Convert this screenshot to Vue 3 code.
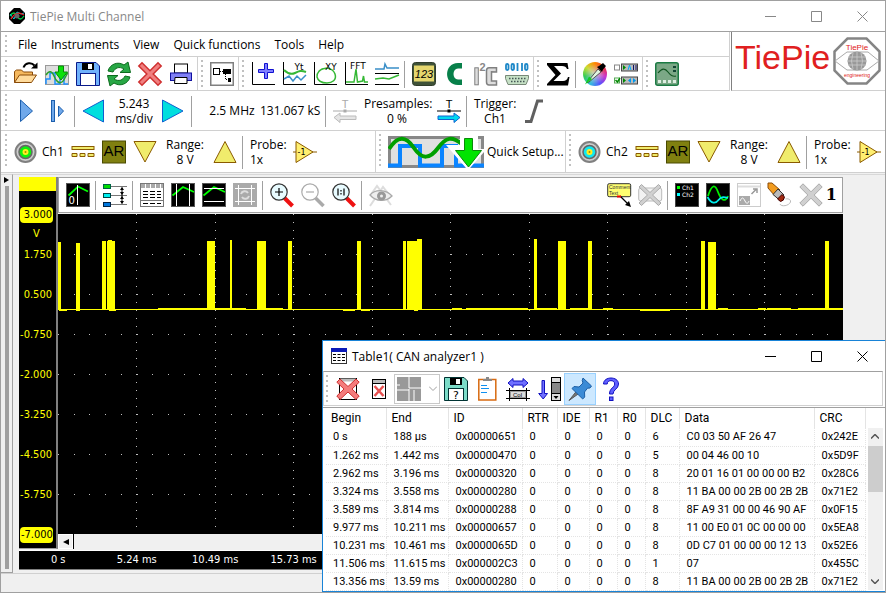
<script setup>
const menu = ['File', 'Instruments', 'View', 'Quick functions', 'Tools', 'Help']

const icons = {
  open: '<path d="M.5 20.500V9.500l2-1.500h5l2 2h9v3" fill="#f5b95f" stroke="#8a4b08"/><path d="M.5 20.500l5-7.500h17l-5 7.500z" fill="#ffdb9c" stroke="#8a4b08"/><path d="M9.500 5.500c2-5 8-5.500 11-2" fill="none" stroke="#000" stroke-width="2"/><path d="M23.500.5v6h-6.500z"/>',
  load: '<rect x=".5" y="3.500" width="23" height="19" fill="#ddd" stroke="#999"/><path d="M1 22v-5h4v-6h5v11h5v-8h4v8h4" fill="none" stroke="#1e90ff" stroke-width="1.500"/><path d="M1 13c3-5 6-4 8 1s5 8 8 6 4-8 6-9" fill="none" stroke="#2ca02c" stroke-width="1.500"/><path d="M13.500 4h5v6h4L16 18l-6-8h3.500z" fill="#0be00b" stroke="#078a07"/>',
  save: '<path d="M.5.500H20l3.500 3.500v19.500H.5z" fill="#6fb1fb" stroke="#0a1a8a"/><rect x="6" y="1" width="12" height="7"/><rect x="12" y="2" width="4" height="5" fill="#fff"/><rect x="4.500" y="11.500" width="15" height="12" fill="#fff" stroke="#0a1a8a"/>',
  refresh: '<path d="M1 9C3 2 11-1 17 3l4-3 2.500 10.500H13l4-3.500C12 4 8 6 6 10z" fill="#28a745" stroke="#0b6b1d"/><path d="M23 15c-2 7-10 10-16 6l-4 3L.5 13.500H11L7 17c5 3 9 1 11-3z" fill="#28a745" stroke="#0b6b1d"/>',
  close: '<path d="M4 .8l8 8 8-8L23.200 4l-8 8 8 8-3.200 3.200-8-8-8 8L.8 20l8-8-8-8z" fill="#f08080" stroke="#d03030" stroke-width="1.500"/>',
  print: '<rect x="5.500" y="2" width="13" height="9" fill="#fff" stroke="#000"/><rect x="1.500" y="11" width="21" height="7.500" fill="#8080f5" stroke="#1010a0"/><path d="M6 15.500h12v6H5.500z" fill="#fff" stroke="#000"/>',
  source: '<rect x=".75" y=".75" width="22.500" height="22.500" fill="#fff" stroke="#808080" stroke-width="1.500"/><rect x="3.500" y="6.500" width="6" height="6" fill="none" stroke="#000"/><path d="M10 9.500h4M15.500 12v5.500H17" stroke="#000" fill="none" stroke-dasharray="1 1"/><rect x="13" y="7" width="8" height="5"/><rect x="18" y="16" width="3" height="4"/>',
  add: '<path d="M1.500 0v22.500H24" fill="none" stroke="#000"/><path d="M13.500 1.500h3v6h6v3h-6v6h-3v-6h-6v-3h6z" fill="#8080ff" stroke="#1010d0"/>',
  yt: '<path d="M1.500 0v22.500H24" fill="none" stroke="#000"/><path d="M2 8c4 4 7 5 11 3s6-3 11-1" fill="none" stroke="#35b835" stroke-width="2"/><path d="M2 17l5-3 4 5 4-5 4 4 5-5" fill="none" stroke="#3a8fc8" stroke-width="1.500"/><text x="12.500" y="8" font-size="9" font-family="DejaVu Sans">Yt</text>',
  xy: '<path d="M1.500 0v22.500H24" fill="none" stroke="#000"/><path d="M6 9c5-5 14-3 16 3s-3 9-8 9-9-2-10-6 4-8 6-8" fill="none" stroke="#35b835" stroke-width="1.500"/><text x="12" y="8" font-size="9" font-family="DejaVu Sans">XY</text>',
  fft: '<path d="M1.500 0v22.500H24" fill="none" stroke="#000"/><path d="M2 20h8l2-13 1.500 13 5-1 1-5 1 6H24" fill="none" stroke="#35b835" stroke-width="1.500"/><text x="6" y="7" font-size="9" font-family="DejaVu Sans">FFT</text>',
  lines: '<path d="M0 7h9l1-5 2 4h12" fill="none" stroke="#3a8fc8" stroke-width="1.500"/><path d="M0 17l8-1 6 1 10-4" fill="none" stroke="#35b835" stroke-width="1.500"/><path d="M0 11.500h24M0 22.500h24" stroke="#000"/>',
  meter: '<rect x=".5" y=".5" width="23" height="23" rx="3" fill="#3f5238" stroke="#303d2b"/><rect x="2" y="3.500" width="20" height="16" fill="#e5d76e"/><text x="12" y="16" text-anchor="middle" font-size="11" font-style="italic" font-family="Liberation Sans">123</text>',
  cee: '<path d="M19 1v5.500h-4c-6 0-6 11 0 11h4V23h-4C.5 23 .5 1 15 1z" fill="#08804a"/>',
  i2c: '<rect x=".8" y="5.800" width="3.500" height="17" fill="#ddd" stroke="#808080"/><text x="5.500" y="9" font-size="11" font-weight="bold" fill="#888" font-family="Liberation Sans">2</text><path d="M22.500 10V5.800h-7.500q-2.500 0-2.500 3V20q0 3 2.500 3h7.500v-4h-5V9.800z" fill="#ddd" stroke="#808080" stroke-width="1.500"/>',
  serial: '<g fill="none" stroke="#1e88c8" stroke-width="1.800"><rect x="1" y="2" width="2.500" height="6" rx="1.200"/><rect x="6.500" y="2" width="2.500" height="6" rx="1.200"/><path d="M12.500 1v8M17 1v8"/><rect x="20" y="2" width="2.500" height="6" rx="1.200"/></g><path d="M.5 13.500h23v3l-2.500 6H3l-2.500-6z" fill="#c5e0c5" stroke="#778877"/><path d="M4 16.500h17M6 19.500h14" stroke="#455" stroke-width="1.500" stroke-dasharray="1.500 1.500"/>',
  sigma: '<path d="M1 1h20.500l1 6h-1.500q-1-3-5-3H8l7 7.500L7.500 19H17q4 0 5-4h1.500L22 23.500H1V22l8.500-9L1 3z"/>',
  scope: '<rect x=".75" y=".75" width="22.500" height="22.500" rx="2" fill="#7ba886" stroke="#1b7a43" stroke-width="1.500"/><path d="M3 11c4-5 7-5 10-1s5 5 8 4" fill="none" stroke="#152" stroke-width="1.200"/><path d="M3 19.500h18" stroke="#dfeee2" stroke-width="3" stroke-dasharray="3 2"/><path d="M18 5h3M18 9h3" stroke="#143" stroke-width="2"/>',
  checks: '<rect x=".5" y="3" width="5" height="5" fill="#fff" stroke="#888"/><rect x="7.500" y="2" width="16" height="7" fill="#bbb" stroke="#444"/><path d="M9 3l3 2.500L9 8z" fill="#080"/><path d="M14 8l1.500-5L17 8" stroke="#0af" fill="none"/><path d="M19.500 3v5M22 3v5" stroke="#116" /><rect x=".5" y="16" width="5" height="5" fill="#fff" stroke="#5a5"/><path d="M1.500 18l2 2L6 16" fill="none" stroke="#080" stroke-width="1.500"/><rect x="7.500" y="15" width="16" height="7" fill="#bbb" stroke="#444"/><path d="M9 16l3 2.500L9 21z" fill="#080"/><path d="M17 16v5l-3-2.500zM19 16v5l3-2.500z" fill="#09e"/>',
  play: '<path d="M6.500 1v21.500L18.500 12z" fill="#6fa8ea" stroke="#1c5fae"/>',
  step: '<rect x="6.500" y="1.500" width="3" height="21" fill="#6fa8ea" stroke="#1c5fae"/><path d="M13.500 7v10.500l5-5.500z" fill="#6fa8ea" stroke="#1c5fae"/>',
  left: '<path d="M21.500 1v22L1 12z" fill="#00dede" stroke="#1060d0"/>',
  right: '<path d="M.5 1v22L21 12z" fill="#00dede" stroke="#1060d0"/>',
  down: '<path d="M1 1.500h22L12 22z" fill="#f0ec6c" stroke="#8a5a00"/>',
  up: '<path d="M1 22.500h22L12 1.500z" fill="#f0ec6c" stroke="#8a5a00"/>',
  coupling: '<rect x="1" y="6.500" width="22" height="3" fill="#f0ec6c" stroke="#8a5a00"/><path d="M1 13.500h5v3H1zM9 13.500h5v3H9zM17 13.500h6v3h-6z" fill="#f0ec6c" stroke="#8a5a00"/>',
  auto: '<rect x=".5" y="1" width="23" height="22" fill="#808010" stroke="#4a4a00"/><text x="12" y="16" text-anchor="middle" font-size="15" font-family="Liberation Sans">AR</text>',
  amp: '<path d="M0 12h24" stroke="#8a5a00"/><path d="M3 1.500v21L20 12z" fill="#ffef70" stroke="#8a5a00"/><text x="4.500" y="15" font-size="8" font-family="DejaVu Sans">-1</text>',
  slope: '<path d="M2 22.500h6L14.500 2H20" fill="none" stroke="#606060" stroke-width="3"/>',
  preOff: '<text x="12" y="9" text-anchor="middle" font-size="11" fill="#aaa" font-family="Liberation Sans">T</text><path d="M0 12h24" stroke="#aaa"/><path d="M10.500 10.500h3v3h-3z" fill="#aaa"/><path d="M1 18.500l6-4.500v3h16v3.500H7v3z" fill="#e5e5e5" stroke="#bbb"/>',
  preOn: '<text x="12" y="9" text-anchor="middle" font-size="11" font-family="Liberation Sans">T</text><path d="M0 12h24" stroke="#000"/><path d="M10.500 10.500h3v3h-3z"/><path d="M23 18.500L17 14v3H1v3.500h16v3z" fill="#00d8f0" stroke="#1060d0"/>',
  cursor: '<rect width="24" height="24" fill="#555"/><rect x="1" y="1" width="22" height="22"/><path d="M2.500 12.500L12 3.500l10 5" fill="none" stroke="#0f0" stroke-width="1.800"/><path d="M11.500 2v20" stroke="#fff"/><text x="2.500" y="21" font-size="10" fill="#fff" font-family="DejaVu Sans">0</text>',
  levels: '<path d="M8 3.500h16M8 12.500h16M8 21.500h16" stroke="#777"/><rect x=".5" y="1.500" width="7" height="4" fill="#0d0" stroke="#064"/><rect x=".5" y="10.500" width="7" height="4" fill="#0ee" stroke="#044"/><rect x=".5" y="19.500" width="7" height="4" fill="#07d" stroke="#024"/><path d="M19 4.500v16" stroke="#000"/><path d="M19 4l2 3h-4zM19 12l2-3h-4zM19 13l2 3h-4zM19 21l2-3h-4z"/>',
  table: '<rect x=".5" y=".5" width="23" height="23" fill="#fff" stroke="#777"/><path d="M1 3h22" stroke="#aaa" stroke-width="4" stroke-dasharray="4 1"/><path d="M3 8.500h18M3 11.500h18M3 14.500h18M3 20.500h18" stroke="#000" stroke-dasharray="5 2"/><path d="M1 17.500h22" stroke="#777"/>',
  vcur: '<rect width="24" height="24" fill="#555"/><rect x="1" y="1" width="22" height="22"/><path d="M1.500 12.500L12 4l11 5" fill="none" stroke="#0f0" stroke-width="1.800"/><path d="M5.500 1v22M18.500 1v22" stroke="#fff"/>',
  hcur: '<rect width="24" height="24" fill="#555"/><rect x="1" y="1" width="22" height="22"/><path d="M1.500 12.500L12 4l11 5" fill="none" stroke="#0f0" stroke-width="1.800"/><path d="M2 5.500h20M2 18.500h20" stroke="#fff"/>',
  cross: '<rect width="24" height="24" fill="#aaa"/><path d="M5.500 2v20M18.500 2v20M2 5.500h20M2 18.500h20" stroke="#fff"/><path d="M8 11c1-3 5-4 7-1M16 13c-1 3-5 4-7 1" fill="none" stroke="#ddd" stroke-width="2"/>',
  zoomIn: '<path d="M14.500 15l8 8" stroke="#e11" stroke-width="4"/><circle cx="9" cy="9" r="8.200" fill="#e8fbff" stroke="#333" stroke-width="1.200"/><path d="M5 9h8M9 5v8" stroke="#000" stroke-width="1.200"/>',
  zoomOut: '<path d="M14.500 15l8 8" stroke="#aaa" stroke-width="3.500"/><circle cx="9" cy="9" r="8.200" fill="#fff" stroke="#aaa" stroke-width="1.200"/><path d="M5 9h8" stroke="#aaa" stroke-width="1.200"/>',
  zoomFit: '<path d="M14.500 15l8 8" stroke="#e11" stroke-width="4"/><circle cx="9" cy="9" r="8.200" fill="#e8fbff" stroke="#333" stroke-width="1.200"/><path d="M6 5.500v7M12 5.500v7M9 7v1.500M9 10v1.500" stroke="#000" stroke-width="1.200"/>',
  eye: '<path d="M1 23L14 4l8 10M3 10L8 3l14 19" fill="none" stroke="#ddd" stroke-width="2"/><path d="M1 12c5-6 16-6 22 1-6 6-16 6-22-1z" fill="#eee" stroke="#aaa" stroke-width="1.300"/><circle cx="12.500" cy="13" r="4.500" fill="#999"/><circle cx="12.500" cy="13" r="1.500" fill="#eee"/>',
  note: '<rect x=".7" y=".7" width="23" height="13" rx="1.500" fill="#ffff70" stroke="#333"/><text x="2" y="6" font-size="5" fill="#333" font-family="Liberation Sans">Comment</text><text x="2" y="12" font-size="5" fill="#333" font-family="Liberation Sans">Text</text><path d="M13 13l9 9" stroke="#000" stroke-width="1.300"/><path d="M24 24l-6-2 4-4z"/><path d="M10 13.500h4" stroke="#e00" stroke-width="2"/>',
  noteOff: '<rect x=".7" y="5" width="23" height="13" rx="2" fill="#f2f2f2" stroke="#bbb"/><path d="M3.500 1.500l8.500 8 8.500-8L23 4l-8.500 8 8.500 8-2.500 2.500-8.500-8-8.500 8L1 20l8.500-8L1 4z" fill="#d0d0d0" stroke="#aaa"/>',
  legend: '<rect width="24" height="24" fill="#444"/><rect x="1" y="1" width="22" height="22"/><path d="M2 3h3v3H2z" fill="#0f0"/><path d="M2 10h3v3H2z" fill="#0ff"/><text x="7" y="7" font-size="6" fill="#fff" font-family="DejaVu Sans">Ch1</text><text x="7" y="14" font-size="6" fill="#fff" font-family="DejaVu Sans">Ch2</text>',
  waves: '<rect width="24" height="24" fill="#444"/><rect x="1" y="1" width="22" height="22"/><path d="M2 13C6 1 9 1 12 9s7 11 10 4" fill="none" stroke="#0e0" stroke-width="1.800"/><path d="M1.500 14c4 7 8 7 11 3s6-3 9.500-2" fill="none" stroke="#0ee" stroke-width="1.800"/>',
  detach: '<rect x=".5" y=".5" width="23" height="23" fill="#fff" stroke="#ccc"/><path d="M1 3.500h22" stroke="#ddd" stroke-width="2"/><rect x="2" y="13" width="11" height="9" fill="#aaa"/><path d="M3 18c2-4 3-4 5 0s3 2 4 0" fill="none" stroke="#fff"/><path d="M14.500 11l5-5M16 6h4v4" fill="none" stroke="#999" stroke-width="1.500"/>',
  erase: '<path d="M0 0h4l8 7-5 6L0 5z" fill="#f29c1f" stroke="#8a4b08"/><path d="M10 6l6 6-4.500 5L5 11.500z" fill="#bbb" stroke="#333"/><path d="M14 11.500l2.500 2.500q-.5 4-4 4.500L9.500 16z" fill="#a22a10" stroke="#400"/><path d="M12 21c1 3 9 2 10.500-2 .5-3-3-3.500-5-3" fill="none" stroke="#bbb"/>',
  wipe: '<path d="M4 .8l8 8 8-8L23.200 4l-8 8 8 8-3.200 3.200-8-8-8 8L.8 20l8-8-8-8z" fill="#d0d0d0" stroke="#aaa"/>',
  delTable: '<rect x="3.500" y="1.500" width="17" height="21" fill="#fff" stroke="#000"/><path d="M4 3h16" stroke="#bbb" stroke-width="3"/><path d="M4 2l8 7.500L20 2l3.200 3.200L16 12l7.200 7L20 22.500l-8-7.500-8 7.500L.8 19 8 12 .8 5.200z" fill="#f47c7c" stroke="#d03030"/>',
  clearTable: '<rect x="5.500" y="2.500" width="13" height="19" fill="#fff" stroke="#000"/><path d="M6 4.500h12" stroke="#bbb" stroke-width="3"/><path d="M6 6.500h12" stroke="#000"/><path d="M7.500 9l9 10M16.500 9l-9 10" stroke="#e85050" stroke-width="2.500"/>',
  layout: '<path d="M0 0h24v24H0z" fill="#999"/><path d="M12 0v11M0 13h12M12 11h12M0 8h3M12 12v12M17 13v11" stroke="#fff"/>',
  saveAs: '<path d="M.5.500H20l3.500 3.500v19.500H.5z" fill="#7cdcc8" stroke="#033"/><rect x="6" y="1" width="12" height="7"/><rect x="12" y="2" width="4" height="5" fill="#fff"/><rect x="4.500" y="11.500" width="15" height="12" fill="#fff" stroke="#033"/><text x="12" y="22" text-anchor="middle" font-size="11" font-family="DejaVu Sans">?</text>',
  clip: '<rect x="3.800" y="2.500" width="17" height="20.500" fill="#fff" stroke="#d86a10" stroke-width="1.500"/><path d="M8 4V2h3V0h3v2h3v2z" fill="#888"/><path d="M6 8.500h6M6 11.500h8M6 15.500h6" stroke="#1090f0"/>',
  column: '<path d="M2 6l5-4.500V4h10V1.500L22 6l-5 4.500V8H7v2.500z" fill="#7070ff" stroke="#1010c0"/><path d="M0 13.500h24M0 21.500h24M3.500 11v13M20.500 11v13" stroke="#000"/><rect x="4.500" y="14.500" width="15" height="6" fill="#ddd" stroke="#999"/><text x="7" y="20" font-size="6" font-family="Liberation Sans">Col</text>',
  scroll: '<path d="M5 3.500h2.500v13h3L6.200 22l-4.500-5.500H5z" fill="#7070ff" stroke="#1010c0"/><rect x="14.500" y=".5" width="9" height="23" fill="#ddd" stroke="#000"/><path d="M15 6h8v10h-8z" fill="#888"/><path d="M14.500 5.500h9M14.500 16.500h9" stroke="#000"/><path d="M16.500 19h5l-2.500 3z"/>',
  pin: '<path d="M1 23.500l8-10 2.500 2.500z" fill="#777" stroke="#555"/><path d="M15 1l8.500 8-1.500 2-2.500.2-3 3.800.2 5-2 2L4 11.500l2-2 5 .5 4-4-.8-2.500z" fill="#3b8bd6" stroke="#1d5fa5"/>',
  help: '<path d="M4.500 7C4.500-1 19.500-1 19.500 7c0 5-5.500 5.500-5.500 10h-3.500c0-6 5.200-6.500 5.200-10 0-4.500-7.500-4.500-7.500 0z" fill="#6060ff" stroke="#1010c0"/><rect x="10.500" y="20" width="3.500" height="3.500" fill="#6060ff" stroke="#1010c0"/>'
}

const toolGroups = [
  ['open', 'load', 'save', 'refresh', 'close', 'print'],
  ['source'],
  ['add', 'yt', 'xy', 'fft', 'lines', '|', 'meter', 'cee', 'i2c', 'serial'],
  ['sigma', '|', 'wheel', 'checks'],
  ['scope']
]
const graphLeft = ['cursor', '|', 'levels', '|', 'table', 'vcur', 'hcur', 'cross', '|', 'zoomIn', 'zoomOut', 'zoomFit', '|', 'eye']
const graphRight = ['note', 'noteOff', '|', 'legend', 'waves', 'detach', 'erase', 'wipe']

const channels = [
  { name: 'Ch1', color: '#10ee10', range: '8 V', probe: '1x' },
  { name: 'Ch2', color: '#10e8f0', range: '8 V', probe: '1x' }
]

const yLabels = ['3.000', '1.750', '0.500', '-0.750', '-2.000', '-3.250', '-4.500', '-5.750', '-7.000']
const xLabels = ['0 s', '5.24 ms', '10.49 ms', '15.73 ms']

// pulses: [left, width, top] in plot units
const pulses = [
  [0, 3, 28], [18, 4, 29], [44, 4, 27], [49, 8, 27], [50, 4, 26],
  [149, 8, 27], [172, 2, 26], [199, 9, 27], [230, 4, 27], [299, 4, 27],
  [345, 3, 27], [349, 15, 27], [359, 5, 25], [476, 3, 25],
  [500, 8, 27], [530, 4, 27], [643, 4, 27], [650, 8, 28], [767, 4, 27]
]
const noise = [
  [1, 8, 96], [18, 4, 96], [51, 7, 96], [100, 30, 94], [130, 20, 94], [148, 40, 94], [200, 25, 94],
  [285, 12, 96], [303, 9, 96], [356, 4, 96], [394, 10, 94], [408, 62, 94], [477, 22, 94], [512, 20, 94],
  [545, 10, 94], [582, 30, 96], [660, 10, 94], [700, 8, 94], [709, 24, 94], [740, 30, 94], [771, 14, 94]
]
const hLines = [40, 80, 120, 160, 200, 240, 280]
const vLines = [1, 2, 3, 4, 5, 6, 7, 8, 9].map(n => Math.floor(n * 78.5))

const columns = ['Begin', 'End', 'ID', 'RTR', 'IDE', 'R1', 'R0', 'DLC', 'Data', 'CRC']
const rows = [
  ['0 s', '188 µs', '0x00000651', 0, 0, 0, 0, 6, 'C0 03 50 AF 26 47', '0x242E'],
  ['1.262 ms', '1.442 ms', '0x00000470', 0, 0, 0, 0, 5, '00 04 46 00 10', '0x5D9F'],
  ['2.962 ms', '3.196 ms', '0x00000320', 0, 0, 0, 0, 8, '20 01 16 01 00 00 00 B2', '0x28C6'],
  ['3.324 ms', '3.558 ms', '0x00000280', 0, 0, 0, 0, 8, '11 BA 00 00 2B 00 2B 2B', '0x71E2'],
  ['3.589 ms', '3.814 ms', '0x00000288', 0, 0, 0, 0, 8, '8F A9 31 00 00 46 90 AF', '0x0F15'],
  ['9.977 ms', '10.211 ms', '0x00000657', 0, 0, 0, 0, 8, '11 00 E0 01 0C 00 00 00', '0x5EA8'],
  ['10.231 ms', '10.461 ms', '0x0000065D', 0, 0, 0, 0, 8, '0D C7 01 00 00 00 12 13', '0x52E6'],
  ['11.506 ms', '11.615 ms', '0x000002C3', 0, 0, 0, 0, 1, '07', '0x455C'],
  ['13.356 ms', '13.59 ms', '0x00000280', 0, 0, 0, 0, 8, '11 BA 00 00 2B 00 2B 2B', '0x71E2']
]
</script>

<template>
  <div class="app">
    <header class="titlebar">
      <svg class="app-icon" viewBox="0 0 16 16">
        <path d="M5 0h6l5 5v6l-5 5H5l-5-5V5z" />
        <path d="M1 8q4-6 7 0t7 0" fill="none" stroke="#0c4" stroke-width="1.300" />
        <path d="M1 6l4 5 3-7 4 2 3-1" fill="none" stroke="#0cd" />
        <path d="M2 11q5-9 13-4" fill="none" stroke="#e22" stroke-width="1.300" />
        <circle cx="8" cy="8" r="2.500" fill="#666" />
      </svg>
      <h1>TiePie Multi Channel</h1>
      <div class="win-buttons faded">
        <button aria-label="Minimize"><svg viewBox="0 0 11 11"><path d="M0 5.500h11" /></svg></button>
        <button aria-label="Maximize"><svg viewBox="0 0 11 11"><path d="M.5.500h10v10H.5z" /></svg></button>
        <button aria-label="Close"><svg viewBox="0 0 11 11"><path d="M.5.500l10 10M10.500.5l-10 10" /></svg></button>
      </div>
    </header>

    <div class="head">
      <div class="head-bars">
        <nav class="bar menu">
          <span class="grip"></span>
          <button v-for="m in menu" :key="m">{{ m }}</button>
        </nav>
        <div class="bar tools">
          <div v-for="(g, i) in toolGroups" :key="i" class="group">
            <span class="grip"></span>
            <template v-for="(t, j) in g" :key="j">
              <span v-if="t === '|'" class="divider"></span>
              <button v-else-if="t === 'wheel'" class="tool wheel" aria-label="Colors">
                <svg class="ic" viewBox="0 0 24 24"><path d="M4 20.500L15 7l3 3L6 20z" fill="#dff5df" stroke="#333" stroke-width=".8" /><path d="M2 22.500l4-8 3 2.500z" fill="#1c2" /><path d="M14 5l5 5 1-2.500 3-3.500-3-3-4 3z" /></svg>
              </button>
              <button v-else class="tool" :aria-label="t"><svg class="ic" viewBox="0 0 24 24" v-html="icons[t]"></svg></button>
            </template>
          </div>
        </div>
      </div>
      <div class="brand">
        <span>TiePie</span>
        <svg viewBox="0 0 48 48">
          <path d="M14.500 1.500h19l13 13v19l-13 13h-19l-13-13v-19z" fill="#fff" stroke="#858585" stroke-width="2.500" />
          <path d="M2 24l12-9h21l11 9-12 9H14z" fill="none" stroke="#aaa" />
          <circle cx="24" cy="24" r="9.500" fill="#999" />
          <path d="M15 20h18M14 24h20M15 28h18M24 15v18M20 16q-3 8 0 16M28 16q3 8 0 16" fill="none" stroke="#ccc" stroke-width=".8" />
          <text x="24" y="13" text-anchor="middle" font-size="8" fill="#e02020" font-family="Liberation Sans">TiePie</text>
          <text x="24" y="40" text-anchor="middle" font-size="5" fill="#e02020" font-family="Liberation Sans">engineering</text>
        </svg>
      </div>
    </div>

    <div class="bar timebase">
      <span class="grip"></span>
      <button class="tool" aria-label="Start"><svg class="ic" viewBox="0 0 24 24" v-html="icons.play"></svg></button>
      <button class="tool" aria-label="One shot"><svg class="ic" viewBox="0 0 24 24" v-html="icons.step"></svg></button>
      <span class="divider tall"></span>
      <button class="tool" aria-label="Slower"><svg class="ic" viewBox="0 0 24 24" v-html="icons.left"></svg></button>
      <span class="readout time">5.243<br>ms/div</span>
      <button class="tool" aria-label="Faster"><svg class="ic" viewBox="0 0 24 24" v-html="icons.right"></svg></button>
      <span class="divider tall"></span>
      <span class="readout rate">2.5 MHz</span>
      <span class="readout samples">131.067 kS</span>
      <span class="divider tall"></span>
      <button class="tool" aria-label="Less presamples"><svg class="ic" viewBox="0 0 24 24" v-html="icons.preOff"></svg></button>
      <span class="readout pre">Presamples:<br>0 %</span>
      <button class="tool" aria-label="More presamples"><svg class="ic" viewBox="0 0 24 24" v-html="icons.preOn"></svg></button>
      <span class="divider tall"></span>
      <span class="readout trig">Trigger:<br>Ch1</span>
      <button class="tool" aria-label="Slope"><svg class="ic" viewBox="0 0 24 24" v-html="icons.slope"></svg></button>
    </div>

    <div class="bar chans">
      <template v-for="(c, i) in channels" :key="c.name">
        <div v-if="i === 1" class="group quick">
          <span class="grip"></span>
          <button class="quick-btn">
            <svg viewBox="0 0 96 32">
              <rect x="1.500" y="1.500" width="93" height="29" fill="#e0e0e0" stroke="#888" stroke-width="3" />
              <path d="M0 29.500h12V10h20v19.500h22V10h14v19.500h28" fill="none" stroke="#0a84ff" stroke-width="4" />
              <path d="M1 13C10-1 18 0 26 12s16 11 24 0S64 0 74 8" fill="none" stroke="#00a000" stroke-width="4" />
              <path d="M72 0h18v13h6v3L82 32h-4L58 9h14z" fill="#fff" />
              <path d="M76.500 2.500h8v12h9L80.500 31l-13-16.500h9z" fill="#00e400" stroke="#0a8a0a" />
            </svg>
            Quick Setup...
          </button>
        </div>
        <div class="group channel">
          <span class="grip"></span>
          <button class="tool" :aria-label="'Toggle ' + c.name">
            <svg class="ic" viewBox="0 0 24 24">
              <circle cx="11.500" cy="12" r="10" fill="#ccc" stroke="#808080" stroke-width="2" />
              <circle cx="11.500" cy="12" r="6.500" :fill="c.color" stroke="#666" stroke-width="1.500" />
              <circle cx="11.500" cy="12" r="3" fill="#ffee20" /><circle cx="11.500" cy="12" r="1" fill="#a80" />
            </svg>
          </button>
          <span class="ch-name">{{ c.name }}</span>
          <button class="tool" aria-label="Coupling"><svg class="ic" viewBox="0 0 24 24" v-html="icons.coupling"></svg></button>
          <button class="tool" aria-label="Auto range"><svg class="ic" viewBox="0 0 24 24" v-html="icons.auto"></svg></button>
          <button class="tool" aria-label="Range down"><svg class="ic" viewBox="0 0 24 24" v-html="icons.down"></svg></button>
          <span class="readout range">Range:<br>{{ c.range }}</span>
          <button class="tool" aria-label="Range up"><svg class="ic" viewBox="0 0 24 24" v-html="icons.up"></svg></button>
          <span class="divider tall"></span>
          <span class="readout probe">Probe:<br>{{ c.probe }}</span>
          <button class="tool" aria-label="Invert"><svg class="ic" viewBox="0 0 24 24" v-html="icons.amp"></svg></button>
        </div>
      </template>
    </div>

    <main class="work">
      <div class="splitter">
        <svg viewBox="0 0 5 6"><path d="M0 0v6l5-3z" /></svg>
        <i></i>
      </div>
      <section class="scope-view">
        <div class="scope-top">
          <div class="y-axis">
            <div class="swatch"></div>
            <div v-for="(y, i) in yLabels" :key="y" class="y-cell">
              <span :class="{ edge: i === 0 || i === yLabels.length - 1 }">{{ y }}</span>
              <span v-if="i === 0" class="unit">V</span>
            </div>
          </div>
          <div class="graph">
            <div class="graph-bar">
              <template v-for="(t, j) in graphLeft" :key="j">
                <span v-if="t === '|'" class="divider"></span>
                <button v-else class="tool" :aria-label="t"><svg class="ic" viewBox="0 0 24 24" v-html="icons[t]"></svg></button>
              </template>
              <span class="spacer"></span>
              <template v-for="(t, j) in graphRight" :key="'r' + j">
                <span v-if="t === '|'" class="divider"></span>
                <button v-else class="tool" :aria-label="t"><svg class="ic" viewBox="0 0 24 24" v-html="icons[t]"></svg></button>
              </template>
              <b class="count">1</b>
            </div>
            <svg class="plot" viewBox="0 0 785 320" preserveAspectRatio="none" shape-rendering="crispEdges">
              <line v-for="x in vLines" :key="'v' + x" :x1="x + .5" :x2="x + .5" y1="0" y2="320" stroke="#c0c0c0" stroke-dasharray="1 7" />
              <line v-for="y in hLines" :key="'h' + y" x1="0" x2="785" :y1="y + .5" :y2="y + .5" stroke="#c0c0c0" stroke-dasharray="1 14.700" />
              <rect v-for="(p, i) in pulses" :key="'p' + i" :x="p[0]" :width="p[1]" :y="p[2]" :height="95 - p[2]" fill="#ff0" />
              <rect x="0" y="95" width="785" height="1" fill="#ff0" />
              <rect v-for="(n, i) in noise" :key="'n' + i" :x="n[0]" :y="n[2]" :width="n[1]" height="1" fill="#ff0" />
            </svg>
            <div class="h-scroll">
              <button aria-label="Scroll left"><svg viewBox="0 0 6 6"><path d="M6 0v6L0 3z" /></svg></button>
              <div></div>
            </div>
          </div>
        </div>
        <div class="x-axis"><span v-for="x in xLabels" :key="x">{{ x }}</span></div>
      </section>
    </main>
    <footer class="status"></footer>

    <section class="dialog">
      <header class="dialog-title">
        <svg class="dlg-icon" viewBox="0 0 16 16"><rect x=".5" y=".5" width="15" height="15" fill="#fff" stroke="#333" /><path d="M0 0h16v4H0z" fill="#0a1ab8" /><path d="M2 6.500h12M2 9.500h12M2 12.500h12" stroke="#000" stroke-dasharray="3 1.500" /></svg>
        <h2>Table1( CAN analyzer1 )</h2>
        <div class="win-buttons">
          <button aria-label="Minimize"><svg viewBox="0 0 11 11"><path d="M0 5.500h11" /></svg></button>
          <button aria-label="Maximize"><svg viewBox="0 0 11 11"><path d="M.5.500h10v10H.5z" /></svg></button>
          <button aria-label="Close"><svg viewBox="0 0 11 11"><path d="M.5.500l10 10M10.500.5l-10 10" /></svg></button>
        </div>
      </header>
      <div class="dialog-bar">
        <span class="grip"></span>
        <button class="tool" aria-label="Delete table"><svg class="ic" viewBox="0 0 24 24" v-html="icons.delTable"></svg></button>
        <button class="tool" aria-label="Clear table"><svg class="ic" viewBox="0 0 24 24" v-html="icons.clearTable"></svg></button>
        <button class="combo" aria-label="Layout">
          <svg class="ic" viewBox="0 0 24 24" v-html="icons.layout"></svg>
          <svg class="chev" viewBox="0 0 8 5"><path d="M0 .5l4 4 4-4" /></svg>
        </button>
        <button class="tool" aria-label="Save as"><svg class="ic" viewBox="0 0 24 24" v-html="icons.saveAs"></svg></button>
        <button class="tool" aria-label="Copy"><svg class="ic" viewBox="0 0 24 24" v-html="icons.clip"></svg></button>
        <button class="tool" aria-label="Fit columns"><svg class="ic" viewBox="0 0 24 24" v-html="icons.column"></svg></button>
        <button class="tool" aria-label="Auto scroll"><svg class="ic" viewBox="0 0 24 24" v-html="icons.scroll"></svg></button>
        <button class="tool pressed" aria-label="Pin"><svg class="ic" viewBox="0 0 24 24" v-html="icons.pin"></svg></button>
        <button class="tool" aria-label="Help"><svg class="ic" viewBox="0 0 24 24" v-html="icons.help"></svg></button>
      </div>
      <div class="dialog-body">
        <table>
          <colgroup><col class="c60"><col class="c62"><col class="c74"><col class="c35"><col class="c32"><col class="c28"><col class="c28"><col class="c34"><col class="c135"><col class="c50"></colgroup>
          <thead><tr><th v-for="c in columns" :key="c">{{ c }}</th></tr></thead>
          <tbody>
            <tr v-for="r in rows" :key="r[0]"><td v-for="(v, i) in r" :key="i">{{ v }}</td></tr>
          </tbody>
        </table>
        <div class="v-scroll">
          <svg viewBox="0 0 8 5"><path d="M0 4.500l4-4 4 4" /></svg>
          <i></i>
          <svg class="end" viewBox="0 0 8 5"><path d="M0 .5l4 4 4-4" /></svg>
        </div>
      </div>
    </section>
  </div>
</template>

<style>
body { background: #f0f0f0; }
</style>

<style scoped>
* { box-sizing: border-box; }
.app {
  position: relative; display: flex; flex-direction: column; min-height: 100vh; overflow: hidden;
  border: 1px solid #a0a0a0; background: #f0f0f0; color: #000;
  font: 12px/15px "Open Sans", "Noto Sans", sans-serif;
}
button { padding: 0; border: 0; background: none; font: inherit; color: inherit; }
svg { display: block; }
h1, h2 { margin: 0; flex: 1; font-size: 12px; font-weight: 400; }
.titlebar { display: flex; align-items: center; gap: 5px; height: 31px; padding-left: 8px; background: #fff; border-bottom: 1px solid #a0a0a0; }
.titlebar h1 { color: #888; }
.app-icon { width: 16px; height: 16px; }
.win-buttons { display: flex; }
.win-buttons button { width: 46px; height: 28px; display: flex; align-items: center; justify-content: center; }
.win-buttons svg { width: 11px; height: 11px; fill: none; stroke: #000; }
.faded svg { stroke: #888; }

.head { display: flex; background: #fff; }
.head-bars { flex: 1; border-right: 1px solid #d0d0d0; }
.bar { display: flex; align-items: center; background: #fff; border-bottom: 1px solid #d0d0d0; padding-left: 1px; }
.menu { height: 25px; gap: 14px; }
.menu .grip { margin-right: -3px; }
.tools { height: 34px; align-items: stretch; }
.group { display: flex; align-items: center; gap: 7px; padding-right: 4px; border-right: 1px solid #d0d0d0; }
.group:last-child { border-right: 0; }
.grip { align-self: stretch; width: 2px; margin: 3px 0 3px 3px; flex: none; background: repeating-linear-gradient(#c0c0c0 0 2px, transparent 2px 5px); }
.tool { width: 24px; height: 24px; flex: none; }
.ic { width: 24px; height: 24px; overflow: visible; }
.divider { align-self: stretch; width: 1px; margin: 4px 0 2px -2px; background: #a0a0a0; flex: none; }
.divider.tall { margin: 5px 0 3px -2px; }
.wheel { border-radius: 50%; background: radial-gradient(#ccc, transparent 60%), conic-gradient(#f80, #e33, #c3c, #55f, #3bd, #3c5, #cd3, #f80); }
.brand { display: flex; align-items: center; justify-content: space-between; width: 154px; padding: 0 4px 0 3px; border-left: 1px solid #808080; border-bottom: 1px solid #d0d0d0; margin-left: 1px; }
.brand span { font: 34px/48px "Liberation Sans", Arial, sans-serif; color: #e02020; padding-bottom: 8px; }
.brand svg { width: 48px; height: 48px; }

.timebase { height: 40px; gap: 7px; }
.readout { text-align: center; white-space: nowrap; flex: none; }
.time { width: 42px; }
.rate { width: 46px; margin-left: 10px; }
.samples { width: 60px; margin-left: -2px; }
.pre { width: 66px; }
.trig { width: 42px; }
.chans { height: 42px; align-items: stretch; }
.channel .ch-name { width: 22px; margin-left: -3px; }
.channel { padding-right: 0; }
.channel:first-child { padding-right: 58px; }
.range { width: 42px; }
.probe { width: 36px; text-align: left; }
.quick { padding-right: 4px; }
.quick-btn { display: flex; align-items: center; gap: 3px; width: 173px; white-space: nowrap; }
.quick-btn svg { width: 96px; height: 32px; flex: none; }

.work { flex: 1; display: flex; padding-top: 1px; }
.splitter { width: 12px; display: flex; flex-direction: column; align-items: center; gap: 3px; padding: 2px 0 3px; border-right: 1px solid #a0a0a0; border-bottom: 1px solid #a0a0a0; border-top: 1px solid #d8d8d8; }
.splitter svg { width: 5px; height: 6px; }
.splitter i { flex: 1; width: 4px; background: #a0a0a0; }
.scope-view { flex: 1; display: flex; flex-direction: column; padding: 2px 42px 3px 6px; border-top: 1px solid #d8d8d8; }
.scope-top { flex: 1; display: flex; }
.y-axis { width: 39px; flex: none; background: #000; border-right: 2px solid #808080; border-bottom: 1px solid #a0a0a0; color: #ff0; font: 11px/16px "DejaVu Sans Condensed", "DejaVu Sans", sans-serif; }
.swatch { height: 14px; margin-bottom: 16px; background: #ff0; }
.y-cell { height: 40px; display: flex; flex-direction: column; align-items: flex-end; padding: 0 3px 0 1px; }
.y-cell:last-child { height: 16px; }
.y-cell span { padding: 0 1px; }
.y-cell .edge { align-self: stretch; text-align: right; background: #ff0; color: #000; border-radius: 4px; }
.y-cell .unit { align-self: center; line-height: 22px; }
.graph { flex: 1; display: flex; flex-direction: column; }
.graph-bar { display: flex; align-items: center; gap: 7px; height: 36px; margin-bottom: 1px; padding: 0 5px 0 7px; background: #fff; border: 1px solid #a0a0a0; }
.graph-bar .divider { margin-top: 3px; }
.spacer { flex: 1; }
.count { font: bold 16px/24px "DejaVu Serif", serif; margin-left: -4px; }
.plot { width: 100%; height: 320px; background: #000; }
.h-scroll { display: flex; gap: 1px; height: 15px; background: #000; }
.h-scroll button { width: 15px; display: flex; align-items: center; justify-content: center; background: #f0f0f0; border: 1px solid #fff; }
.h-scroll svg { width: 6px; height: 6px; }
.h-scroll div { flex: 1; background: #f0f0f0; }
.x-axis { display: grid; grid-template-columns: repeat(21, 1fr); height: 20px; margin-top: 1px; background: #000; border-bottom: 1px solid #808080; border-top: 1px solid #fff; color: #fff; font: 11px/18px "DejaVu Sans Condensed", "DejaVu Sans", sans-serif; }
.x-axis span { grid-column: span 2; text-align: center; white-space: nowrap; }
.status { height: 19px; border-top: 1px solid #d0d0d0; }

.dialog { position: absolute; right: -1px; bottom: 0; width: 564px; height: 252px; display: flex; flex-direction: column; background: #fff; border: 1px solid #1883d7; }
.dialog-title { display: flex; align-items: center; gap: 5px; height: 30px; padding-left: 8px; }
.dlg-icon { width: 16px; height: 16px; }
.dialog-bar { display: flex; align-items: center; gap: 7px; height: 35px; margin: 0 2px 0 0; border: 1px solid #d0d0d0; border-top-color: #a0a0a0; }
.dialog-bar .grip { margin-left: 2px; margin-right: 1px; }
.combo { display: flex; align-items: center; gap: 8px; width: 46px; height: 30px; padding-left: 2px; border: 1px solid #c8c8c8; margin: 0 -3px 0 -4px; }
.chev { width: 8px; height: 5px; fill: none; stroke: #a0a0a0; }
.pressed { background: #cce8ff; box-shadow: 0 0 0 3px #cce8ff, 0 0 0 4px #99d1ff; }
.dialog-body { flex: 1; display: flex; min-height: 0; margin-top: 1px; padding-left: 3px; border-top: 1px solid #a0a0a0; }
table { width: 539px; table-layout: fixed; border-collapse: collapse; font: 11px/17px Roboto, "Liberation Sans", sans-serif; }
th, td { padding: 0 0 0 7px; height: 18px; font-weight: 400; text-align: left; white-space: nowrap; border-right: 1px dotted #e4e4e4; border-bottom: 1px dotted #e4e4e4; }
th { height: 20px; padding-left: 5px; font-size: 12px; line-height: 20px; border-right: 1px solid #e4e4e4; border-bottom: 0; }
.c60 { width: 60px; } .c62 { width: 62px; } .c74 { width: 74px; } .c35 { width: 35px; } .c32 { width: 32px; } .c28 { width: 28px; } .c34 { width: 34px; } .c135 { width: 135px; } .c50 { width: 51px; }
.v-scroll { width: 15px; margin: 20px 0 1px 2px; padding: 6px 0; display: flex; flex-direction: column; align-items: center; gap: 7px; background: #f0f0f0; }
.v-scroll svg { width: 8px; height: 5px; fill: none; stroke: #555; stroke-width: 1.500; }
.v-scroll i { width: 15px; height: 46px; background: #cdcdcd; }
.v-scroll .end { margin-top: auto; }
</style>
